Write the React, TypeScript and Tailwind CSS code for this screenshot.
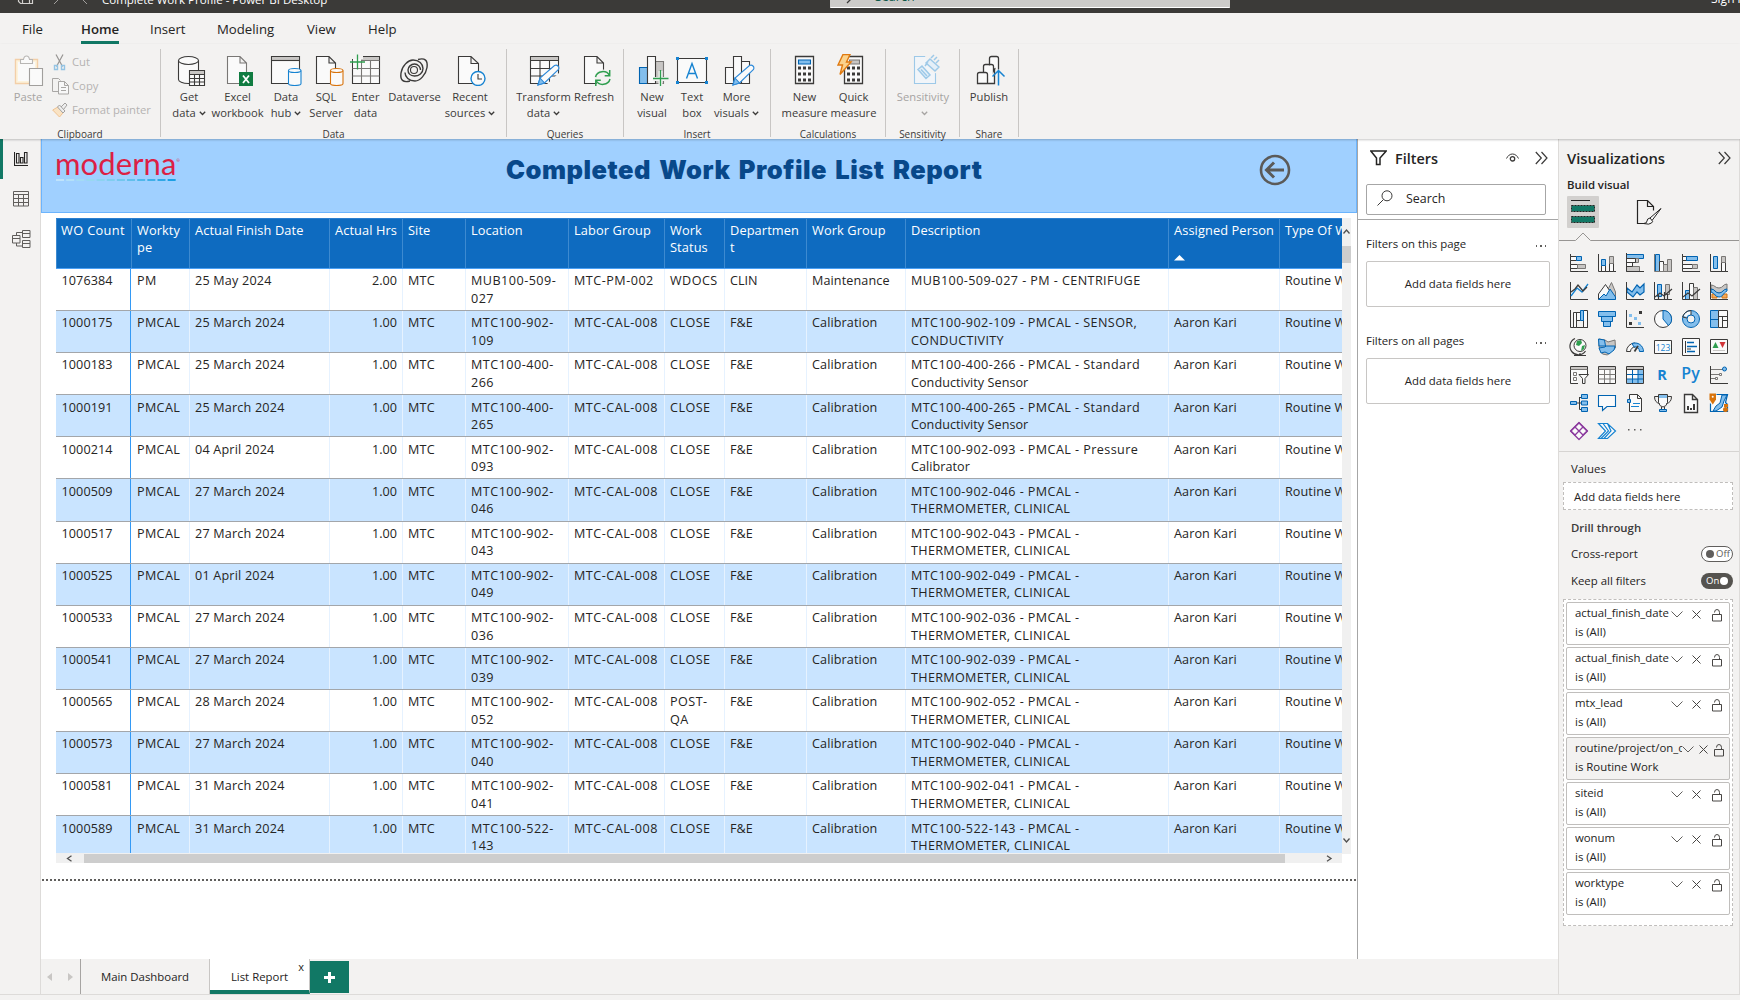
import React from "react";

type P = { children?: React.ReactNode };

const K = "#3b3a39";
const B = "#0063b1";
const L = "#83beec";
const G = "#797775";
const S = "#c8c6c4";
const W = "#fafafa";

/* ---------- ribbon ---------- */

function RI({ children, w = 32 }: P & { w?: number }) {
  return (
    <svg width={w} height="32" viewBox={`0 0 ${w} 32`} fill="none" strokeWidth="1.1" className="block shrink-0">
      {children}
    </svg>
  );
}

const Doc = ({ c = K }: { c?: string }) => (
  <path d="M5.500 2.500H18l6.500 6.500v20.500H5.500zM18 2.500v6.500h6.500" fill={W} stroke={c} />
);

const Pencil = () => (
  <g>
    <path d="M10 31l2-7L26.500 11.500q2-1 3.500.5t.5 3.500L16.500 29z" fill={W} stroke="#2b88d8" />
    <path d="M10 31l2-7 4.500 5z" fill={L} stroke="#2b88d8" />
  </g>
);

const icons: Record<string, React.ReactNode> = {
  paste: (
    <RI>
      <path d="M3.500 5.500h22v24h-22z" stroke="#f3cfa8" strokeWidth="1.400" fill="#fdf3dc" />
      <path d="M6 8h17v19H6z" fill={W} />
      <path d="M8.500 9.500v-4h3q.5-3.500 3-3.500t3 3.500h3v4z" fill={W} stroke="#b8b6b4" />
      <path d="M17.500 14.500h13v17h-13z" fill={W} stroke="#a19f9d" />
    </RI>
  ),
  getdata: (
    <RI>
      <path d="M3.500 6.500v19c0 2 4 4 10 4s10-2 10-4v-19" fill={W} stroke={K} />
      <ellipse cx="13.500" cy="6.500" rx="10" ry="4" fill={W} stroke={K} />
      <path d="M14.500 16.500h15v15h-15z" fill={W} stroke={K} />
      <path d="M15 17h14v3H15z" fill={S} />
      <path d="M14.500 20.500h15M14.500 24.500h15M14.500 28h15M19.500 20v12M24.500 20v12" stroke={K} />
    </RI>
  ),
  excel: (
    <RI>
      <Doc c={G} />
      <path d="M17 18h14v14H17z" fill="#107c41" />
      <path d="M21 21.500l6 7.500M27 21.500L21 29" stroke="#fff" strokeWidth="1.800" />
    </RI>
  ),
  datahub: (
    <RI>
      <path d="M1.500 2.500h28v27h-28z" fill={W} stroke={K} />
      <path d="M2 3h27v3.500H2z" fill={S} />
      <path d="M1.500 6.500h28" stroke={K} />
      <path d="M18.500 16.500v13c0 1.200 2.500 2 6.200 2s6.300-.8 6.300-2v-13" fill={W} stroke="#1683d1" />
      <ellipse cx="24.700" cy="16.500" rx="6.200" ry="2" fill={W} stroke="#1683d1" />
    </RI>
  ),
  sql: (
    <RI>
      <path d="M4.500 2.500H17l6.500 6.500v20.500h-19zM17 2.500v6.500h6.500" fill={W} stroke={K} />
      <path d="M18.500 16.500v13c0 1.200 2.500 2 6.200 2s6.300-.8 6.300-2v-13" fill={W} stroke="#d8730c" />
      <ellipse cx="24.700" cy="16.500" rx="6.200" ry="2" fill={W} stroke="#d8730c" />
    </RI>
  ),
  enter: (
    <RI>
      <path d="M3.500 2.500h27v27h-27z" fill={W} stroke={K} />
      <path d="M4 3h26v3.500H4z" fill={S} />
      <path d="M3.500 6.500h27M3.500 14.500h27M3.500 22h27M12.500 7v22M21.500 7v22" stroke={G} />
      <path d="M0 0h14v5H3v10H0z" fill="#f3f2f1" />
      <path d="M4 5h8v9H4z" fill={W} />
      <path d="M8.500.5v15M1 8h15" stroke="#2f9e4f" strokeWidth="1.300" />
    </RI>
  ),
  dataverse: (
    <RI>
      <path
        d="M12 27c-7 2-10-1-9-8S10 6 15 6c6 0 10 4 10 8.500S21 22 16.500 22 10 19 10 16s3-6 6.500-6 6 3 6 6M20 5.500c7-2 10 1 9 8S22 27 17 27c-6 0-10-4-10-8.500"
        stroke={K}
        strokeWidth="1.400"
      />
      <circle cx="16" cy="16" r="3.500" stroke={K} />
    </RI>
  ),
  recent: (
    <RI>
      <path d="M4.500 2.500H17l7.500 7v20h-20zM17 2.500v7h7.500" fill={W} stroke={K} />
      <circle cx="24" cy="24.500" r="7" fill={W} stroke="#1683d1" strokeWidth="1.400" />
      <path d="M24 20v5h4" stroke={K} />
    </RI>
  ),
  transform: (
    <RI>
      <path d="M2.500 2.500h28v27h-28z" fill={W} stroke={K} />
      <path d="M3 3h27v3.500H3z" fill={S} />
      <path d="M2.500 6.500h28M2.500 14.500h28M2.500 22h28M12 7v22M21.500 7v22" stroke={K} />
      <path d="M18 31l15-14v16z" fill="#f3f2f1" />
      <Pencil />
    </RI>
  ),
  refresh: (
    <RI>
      <Doc />
      <circle cx="24" cy="24" r="8.500" fill="#f3f2f1" />
      <path d="M16.500 23a7.500 7 0 0 1 14-1.500M31 25a7.500 7 0 0 1-14 1.500M30.700 16v5.700h-5M16.800 32v-5.700h5" stroke="#2f9e4f" strokeWidth="1.500" />
    </RI>
  ),
  newvisual: (
    <RI>
      <path d="M2.500 13.500h8v16h-8z" fill={L} stroke={B} />
      <path d="M18.500 7.500h8v22h-8z" fill={S} stroke={G} />
      <path d="M10.500 2.500h8v27h-8z" fill={W} stroke={K} />
      <path d="M23.500 17v15M16 25h15" stroke="#f3f2f1" strokeWidth="4" />
      <path d="M23.500 16v16M16 24.500h15.500" stroke="#2f9e4f" strokeWidth="1.300" />
    </RI>
  ),
  textbox: (
    <RI>
      <path d="M1.500 4.500h29v24h-29z" fill={W} stroke={K} />
      <path d="M10.500 24.500L16 9.500l5.500 15M12.500 19.500h7" stroke="#1683d1" strokeWidth="1.400" />
      <path d="M0 3h3v3H0zM29 3h3v3h-3zM0 27h3v3H0zM29 27h3v3h-3z" fill="#1683d1" />
    </RI>
  ),
  more: (
    <RI>
      <path d="M2.500 13.500h8v16h-8zM18.500 7.500h8v22h-8zM10.500 2.500h8v27h-8z" fill={W} stroke={K} />
      <Pencil />
    </RI>
  ),
  calc: (
    <RI>
      <path d="M7.500 2.500h18v27h-18z" fill={W} stroke={K} strokeWidth="1.300" />
      <path d="M10.500 6h12v4h-12z" fill={L} stroke={B} />
      <path d="M11.500 12.500v16M16.500 12.500v16M21.500 12.500v16" stroke={K} strokeWidth="3" strokeDasharray="3 3" />
    </RI>
  ),
  quick: (
    <RI>
      <path d="M7.500 2.500h18v27h-18z" fill={W} stroke={K} strokeWidth="1.300" />
      <path d="M12.500 6h10v4h-10z" fill={S} stroke={G} />
      <path d="M11.500 12.500v16M16.500 12.500v16M21.500 12.500v16" stroke={K} strokeWidth="3" strokeDasharray="3 3" />
      <path d="M6 .5h7L9.500 8h4.500L3 20.500 5.500 11H1z" fill="#fbd38d" stroke="#e07a10" strokeWidth="1.400" />
    </RI>
  ),
  sens: (
    <RI>
      <path d="M6.500 2.500h21v27h-21z" fill="#f1f5f9" stroke="#9dc9e8" />
      <path d="M17 2l14-2v20l-8-2z" fill="#f3f2f1" />
      <path d="M10 15.500l4-3.500 8 9-4 3.500zM13 15.500l6 6.500M18 9l4-4 9 8-4 4zM23 4l3-3M26 6l3-3M28 9l3-3M17 12l3-4" fill="#e4eff8" stroke="#9dc9e8" strokeWidth="1.500" />
    </RI>
  ),
  publish: (
    <RI>
      <path d="M14.500 11.500v-7q0-2 2-2h5q2 0 2 2v11M8.500 19.500v-7q0-2 2-2h6q2 0 2 2v17" fill={W} stroke={K} strokeWidth="1.300" />
      <path d="M2.500 29.500V20.500q0-2 2-2h6q2 0 2 2v9zM12.500 29.500h7v-14q0-1 1-1" fill={W} stroke={K} strokeWidth="1.300" />
      <path d="M23.500 31.500V17M17.500 22.500l6-6 6 6" stroke="#1683d1" strokeWidth="1.500" />
    </RI>
  ),
};

function Chev({ c = "#3b3a39" }: { c?: string }) {
  return (
    <svg width="7" height="5" viewBox="0 0 7 5" fill="none" className="mt-px ml-[3px] inline-block">
      <path d="M.8.8l2.700 2.700L6.200.8" stroke={c} strokeWidth="1.300" />
    </svg>
  );
}

function Btn({ icon, a, b, chev, w, dim, shift }: { icon: string; a: string; b?: string; chev?: boolean; w: string; dim?: boolean; shift?: string }) {
  return (
    <div className={`flex shrink-0 flex-col items-center whitespace-nowrap text-[11.2px] leading-4 ${w} ${dim ? "text-[#a6a4a2]" : "text-[#3b3a39]"}`}>
      <div className={shift ?? ""}>{icons[icon]}</div>
      <div className="mt-[3px]">{a}</div>
      <div className="flex h-4 items-center">
        {b}
        {chev && <Chev c={dim ? "#a6a4a2" : "#3b3a39"} />}
      </div>
    </div>
  );
}

function Group({ label, w, pl, children }: P & { label: string; w: string; pl?: string }) {
  return (
    <div className={`flex h-[88px] shrink-0 flex-col border-r border-[#c8c6c4] ${w}`}>
      <div className={`flex h-[79px] shrink-0 pt-[5px] ${pl ?? ""}`}>{children}</div>
      <div className="text-center text-[10px] leading-[12px] text-[#3b3a39]">{label}</div>
    </div>
  );
}

function Ribbon() {
  return (
    <div className="relative z-10 flex h-[95px] shrink-0 pt-[5px] shadow-[0_1px_2px_rgba(0,0,0,0.22)]">
      <Group label="Clipboard" w="w-[161px]" pl="pl-[14px]">
        <Btn icon="paste" a="Paste" w="w-[28px]" dim />
        <div className="-mt-1 ml-[10px] flex flex-col text-[11.300px] text-[#b5b3b1]">
          <div className="flex h-6 items-center gap-[5px]">
            <svg width="15" height="17" viewBox="0 0 15 17" fill="none">
              <path d="M4 .5l6.500 12M11 .5L4.500 12.500" stroke="#979593" strokeWidth="1.200" />
              <path d="M2.500 11.500h3v4h-3zM9.500 11.500h3v4h-3z" stroke="#94c4e4" strokeWidth="1.400" />
            </svg>
            Cut
          </div>
          <div className="flex h-6 items-center gap-[3px]">
            <svg width="17" height="17" viewBox="0 0 17 17" fill="none" stroke="#a9a7a5">
              <path d="M6.500 13.500h-6V.5h6l2 2" />
              <path d="M6.500 3.500h6l4 4v8.500h-10zM12.500 3.500v4h4M9 9.500h5M9 12.500h5" fill="#f8f8f8" />
            </svg>
            Copy
          </div>
          <div className="flex h-6 items-center gap-1 whitespace-nowrap">
            <svg width="16" height="16" viewBox="0 0 16 16" fill="none">
              <path d="M.7 8l6-3.500 5 5.500-4.200 5z" fill="#f9e3c4" stroke="#efc291" />
              <path d="M5.500 5l2-2 5.500 6-2 2zM9 5l4-4 2 2-3.500 4.500" fill="#eee" stroke="#a3a19f" />
            </svg>
            Format painter
          </div>
        </div>
      </Group>
      <Group label="Data" w="w-[346px]" pl="pl-[5px]">
        <Btn icon="getdata" a="Get" b="data" chev w="w-[46px]" shift="pl-[4px]" />
        <Btn icon="excel" a="Excel" b="workbook" w="w-[51px]" />
        <Btn icon="datahub" a="Data" b="hub" chev w="w-[46px]" />
        <Btn icon="sql" a="SQL" b="Server" w="w-[34px]" shift="pl-[3px]" />
        <Btn icon="enter" a="Enter" b="data" w="w-[45px]" shift="pr-[2px]" />
        <Btn icon="dataverse" a="Dataverse" w="w-[53px]" shift="pr-[2px]" />
        <Btn icon="recent" a="Recent" b="sources" chev w="w-[58px]" />
      </Group>
      <Group label="Queries" w="w-[117px]" pl="pl-[9px]">
        <Btn icon="transform" a="Transform" b="data" chev w="w-[55px]" />
        <Btn icon="refresh" a="Refresh" w="w-[46px]" shift="pl-[2px]" />
      </Group>
      <Group label="Insert" w="w-[147px]" pl="pl-[7px]">
        <Btn icon="newvisual" a="New" b="visual" w="w-[42px]" shift="pl-[2px]" />
        <Btn icon="textbox" a="Text" b="box" w="w-[38px]" />
        <Btn icon="more" a="More" b="visuals" chev w="w-[51px]" shift="pl-[4px]" />
      </Group>
      <Group label="Calculations" w="w-[115px]" pl="pl-[9px]">
        <Btn icon="calc" a="New" b="measure" w="w-[49px]" shift="pr-[1px]" />
        <Btn icon="quick" a="Quick" b="measure" w="w-[49px]" shift="pr-[2px]" />
      </Group>
      <Group label="Sensitivity" w="w-[74px]" pl="pl-[9px]">
        <Btn icon="sens" a="Sensitivity" chev w="w-[56px]" dim shift="pl-[1px]" />
      </Group>
      <Group label="Share" w="w-[59px]" pl="pl-[6px]">
        <Btn icon="publish" a="Publish" w="w-[46px]" shift="pl-[4px]" />
      </Group>
    </div>
  );
}

/* ---------- table ---------- */

const cols = "grid grid-cols-[76px_58px_140px_73px_63px_103px_96px_60px_82px_99px_263px_111px_120px]";

const heads = ["WO Count", "Workty\npe", "Actual Finish Date", "Actual Hrs", "Site", "Location", "Labor Group", "Work\nStatus", "Departmen\nt", "Work Group", "Description", "Assigned Person", "Type Of Work"];

const T = "THERMOMETER, CLINICAL";
const raw: [string, string, string, string, string][] = [
  ["1000175", "25 March 2024", "MTC100-902-109", "SENSOR,\nCONDUCTIVITY", "CLOSE"],
  ["1000183", "25 March 2024", "MTC100-400-266", "Standard\nConductivity Sensor", "CLOSE"],
  ["1000191", "25 March 2024", "MTC100-400-265", "Standard\nConductivity Sensor", "CLOSE"],
  ["1000214", "04 April 2024", "MTC100-902-093", "Pressure\nCalibrator", "CLOSE"],
  ["1000509", "27 March 2024", "MTC100-902-046", "\n" + T, "CLOSE"],
  ["1000517", "27 March 2024", "MTC100-902-043", "\n" + T, "CLOSE"],
  ["1000525", "01 April 2024", "MTC100-902-049", "\n" + T, "CLOSE"],
  ["1000533", "27 March 2024", "MTC100-902-036", "\n" + T, "CLOSE"],
  ["1000541", "27 March 2024", "MTC100-902-039", "\n" + T, "CLOSE"],
  ["1000565", "28 March 2024", "MTC100-902-052", "\n" + T, "POST-\nQA"],
  ["1000573", "27 March 2024", "MTC100-902-040", "\n" + T, "CLOSE"],
  ["1000581", "31 March 2024", "MTC100-902-041", "\n" + T, "CLOSE"],
  ["1000589", "31 March 2024", "MTC100-522-143", "\n" + T, "CLOSE"],
];

const splitLoc = (l: string) => l.slice(0, 11) + "\n" + l.slice(11);

const rows: string[][] = [
  ["1076384", "PM", "25 May 2024", "2.00", "MTC", splitLoc("MUB100-509-027"), "MTC-PM-002", "WDOCS", "CLIN", "Maintenance", "MUB100-509-027 - PM - CENTRIFUGE", "", "Routine Work"],
  ...raw.map(([id, d, loc, desc, st]) => [id, "PMCAL", d, "1.00", "MTC", splitLoc(loc), "MTC-CAL-008", st, "F&E", "Calibration", `${loc} - PMCAL - ${desc}`, "Aaron Kari", "Routine Work"]),
];

const tracks = [
  "tracking-[0.1px]",
  "tracking-[0.35px]",
  "tracking-[0.2px]",
  "",
  "tracking-[0.2px]",
  "tracking-[0.48px]",
  "tracking-[0.5px]",
  "tracking-[0.45px]",
  "",
  "tracking-[0.12px]",
  "tracking-[0.42px]",
  "tracking-[0.1px]",
  "tracking-[0.1px]",
];

function Desc({ text }: { text: string }) {
  const [first, second] = text.split("\n");
  return (
    <>
      <div>{first}</div>
      {second && <div className={second === second.toUpperCase() ? "tracking-[0.33px]" : "tracking-[0.05px]"}>{second}</div>}
    </>
  );
}

function DataTable() {
  return (
    <div className="ml-[15px] w-[1295px]">
      <div className="flex h-[636px]">
        <div className="h-[635px] w-[1286px] overflow-hidden text-[12.6px] leading-[17.5px]">
          <div className={`h-[51px] border-t border-b border-t-[#2b7fd0] border-b-[#4aa0f5] bg-[#0e6bc0] text-[12.800px] text-white ${cols}`}>
            {heads.map((h, i) => (
              <div key={h} className={`whitespace-pre border-r border-[#3d8ad0] pt-[3px] leading-[17px] ${i === 0 ? "border-l pl-[4px] tracking-[0.35px]" : "pl-[5px] tracking-[0.1px]"}`}>
                {h}
                {h === "Assigned Person" && (
                  <svg width="11" height="6" viewBox="0 0 11 6" className="mt-[16px] block">
                    <path d="M0 5.500L5.500 0 11 5.500z" fill="#fff" />
                  </svg>
                )}
              </div>
            ))}
          </div>
          {rows.map((r, i) => (
            <div key={r[0]} className={`h-[42.100px] border-b border-[#a3a6aa] text-[#252423] ${cols} ${i % 2 ? "bg-[#c9e4ff]" : "bg-white"}`}>
              {r.map((c, j) => (
                <div
                  key={j}
                  className={`whitespace-pre pt-[3.300px] ${tracks[j]} ${j === 0 ? "mr-px border-r border-[#3399f5] pl-[5.500px]" : "border-r border-[#e6f2ff] pl-[5px]"} ${j === 3 ? "pr-[5px] text-right" : ""}`}
                >
                  {j === 10 ? <Desc text={c} /> : c}
                </div>
              ))}
            </div>
          ))}
        </div>
        <div className="flex w-[9px] flex-col items-center bg-[#f0f0f0] pt-[11px]">
          <svg width="7" height="5" viewBox="0 0 7 5" fill="none">
            <path d="M.5 4.500l3-3.500 3 3.500" stroke="#505050" strokeWidth="1.300" />
          </svg>
          <div className="mt-3 h-[17px] w-full bg-[#cdcdcd]" />
          <div className="grow" />
          <svg width="7" height="5" viewBox="0 0 7 5" fill="none" className="mb-[11px]">
            <path d="M.5.5l3 3.500 3-3.500" stroke="#505050" strokeWidth="1.300" />
          </svg>
        </div>
      </div>
      <div className="-mt-px flex h-[10px] w-[1286px] items-center bg-[#f0f0f0]">
        <svg width="28" height="7" viewBox="0 0 28 7" fill="none">
          <path d="M15.500.8l-4 2.700 4 2.700" stroke="#505050" strokeWidth="1.300" />
        </svg>
        <div className="h-[9px] w-[1201px] bg-[#cdcdcd]" />
        <svg width="57" height="7" viewBox="0 0 57 7" fill="none">
          <path d="M42 .8l4 2.700-4 2.700" stroke="#505050" strokeWidth="1.300" />
        </svg>
      </div>
    </div>
  );
}

/* ---------- visual gallery icons ---------- */

const axis = <path d="M.5 0v17.500H18" stroke={K} />;

const viz: React.ReactNode[] = [
  <>{axis}<path d="M.5 2.500h6v4h-6zM.5 10.500h7v4h-7z" fill={W} stroke={K} /><path d="M6.500 2.500h5v4h-5z" fill={L} stroke={B} /><path d="M7.500 10.500h8v4h-8z" fill={S} stroke={G} /></>,
  <>{axis}<path d="M3.500 11.500h4v6h-4zM11.500 8.500h4v9h-4z" fill={W} stroke={K} /><path d="M3.500 5.500h4v6h-4z" fill={L} stroke={B} /><path d="M11.500 2.500h4v7h-4z" fill={S} stroke={G} /></>,
  <><path d="M.5.500h17v4H.5z" fill={L} stroke={B} /><path d="M.5 4.500h12v4H.5zM.5 12.500h13v5H.5z" fill={S} stroke={G} /><path d="M.5 4.500h9v4h-9zM.5 8.500h6v4h-6z" fill={W} stroke={K} /><path d="M.5-1v18.500H18" stroke={K} /></>,
  <><path d="M1.500.5h4v17h-4z" fill={L} stroke={B} /><path d="M5.500 7.500h4v10h-4z" fill={W} stroke={K} /><path d="M9.500 10.500h4v7h-4zM13.500 5.500h4v12h-4z" fill={S} stroke={G} /><path d="M.5 0v17.500H18" stroke={G} /></>,
  <>{axis}<path d="M.5 2.500h5v4h-5zM.5 10.500h10v4h-10z" fill={W} stroke={K} /><path d="M4.500 2.500h11v4h-11z" fill={L} stroke={B} /><path d="M10.500 10.500h5v4h-5z" fill={S} stroke={G} /></>,
  <>{axis}<path d="M11.500 8.500h4v9h-4z" fill={W} stroke={K} /><path d="M3.500 2.500h4v12h-4z" fill={L} stroke={B} /><path d="M11.500 2.500h4v6h-4z" fill={S} stroke={G} /></>,
  <>{axis}<path d="M1 14l6-8 5 4 6-8" stroke="#1683d1" strokeWidth="1.300" /><path d="M1 10l4-3 3-4 5 6 4-4" stroke={K} strokeWidth="1.300" /></>,
  <><path d="M7 13L13.500.5 17.500 10v7h-8z" fill={S} stroke={G} /><path d="M.5 12l7-9.500 6 9-6 5.500h-7z" fill={W} stroke={K} /><path d="M.5 17.500L6 12l2 2 4-7 5.500 8v2.500z" fill={L} stroke={B} /></>,
  <><path d="M1 6l5 4 5-7 3 3 4-4v8l-4 3-3-3-4 5-6-5z" fill={L} stroke={B} strokeWidth="1.200" />{axis}</>,
  <>{axis}<path d="M3.500 2.500h4v12h-4z" fill={L} stroke={B} /><path d="M11.500 2.500h4v10h-4z" fill={S} stroke={G} /><path d="M4.500 12v5M10.500 10v7M13.500 12v5M1 15l5-4 4 3 8-7" stroke={K} strokeWidth="1.200" /></>,
  <><path d="M3.500 8.500h4v9h-4z" fill={L} stroke={B} /><path d="M7.500 1.500h4v16h-4z" fill={W} stroke={K} /><path d="M11.500 5.500h4v12h-4z" fill={S} stroke={G} />{axis}<path d="M1 15l5-4 4 3 8-7" stroke={K} strokeWidth="1.200" /></>,
  <><path d="M2 12h5v4H2zM12 12h5v4h-5zM7 9h5v3H7z" fill="#f0a95c" stroke="#d8730c" /><path d="M1 3c4 0 4 3 8 3s4-4 8-4v5c-4 0-4 4-8 4s-4-4-8-4z" fill={S} stroke={G} /><path d="M1 7c4 0 4 4 8 4s4-4 8-4v2c-4 2-4 6-8 6s-4-4-8-5z" fill={L} stroke={B} />{axis}</>,
  <>{axis}<path d="M3.500 2.500h3v15h-3zM6.500 2.500h4v8h-4zM13.500.5h4v17h-4z" fill={W} stroke={K} /><path d="M10.500.5h3v10h-3z" fill={L} stroke={B} /></>,
  <path d="M.5 1.500h17v5H.5zM3.500 6.500h11v5h-11zM5.500 11.500h7v5h-7z" fill={L} stroke={B} />,
  <>{axis}<path d="M3 4h3v3H3zM8 7h3v3H8zM12 12h3v3h-3z" fill={L} /><path d="M13 1h3v3h-3zM3 12h3v3H3z" fill={K} /></>,
  <><circle cx="9" cy="9" r="8.500" fill={W} stroke={K} /><path d="M9 .5V9l5.500 6.500A8.500 8.500 0 0 0 9 .5z" fill={L} stroke={B} /></>,
  <><circle cx="9" cy="9" r="6.300" stroke={L} strokeWidth="4" /><path d="M2.500 6A6.500 6.500 0 0 1 9 2.500" stroke={W} strokeWidth="4" /><circle cx="9" cy="9" r="8.500" stroke={B} /><circle cx="9" cy="9" r="4" stroke={B} /><path d="M.7 7A8.500 8.500 0 0 1 9 .5V5M.7 7l4.300 1" stroke={K} /></>,
  <><path d="M.5.500h8v17h-8z" fill={L} stroke={B} /><path d="M.5 9.500h8" stroke={B} /><path d="M8.500.500h9v17h-9zM8.500 6.500h9M12.500 6.500v11M12.500 10.500h5" fill={W} stroke={K} /></>,
  <><circle cx="10" cy="7.500" r="6" fill={W} stroke={K} /><path d="M7 3l4-1 1 3-3 3-3-1zM12 8l3-1-1 4-3 2z" fill="#2f9e4f" /><path d="M5 .5A8.500 8.500 0 1 0 15.500 13M10 15v2.500M4 17.500h12" stroke={K} strokeWidth="1.200" /></>,
  <><path d="M1 1l6 1 3 2 7-2 .5 8-4 3-4 4-5-1L1 9z" fill={S} stroke={G} /><path d="M.5 1l6 1 1 6H1zM8 8h9l-1 4-5 4-4-2-4 1-2-5 6-1z" fill={L} stroke={B} /></>,
  <><path d="M.5 13.500A8.500 8.500 0 0 1 9 5v4a4.500 4.500 0 0 0-4.500 4.500z" fill={W} stroke={K} /><path d="M6 5.500a8.500 8.500 0 0 1 11.500 8h-4A4.500 4.500 0 0 0 8 9z" fill={L} stroke={B} /><path d="M8.500 13.500L12 8" stroke={K} strokeWidth="1.800" /></>,
  <><path d="M.5 2.500h17v13H.5z" fill={W} stroke={K} /><text x="9" y="12.500" fontSize="8.500" textAnchor="middle" fill="#1683d1" fontFamily="Open Sans">123</text></>,
  <><path d="M.5.500h17v17H.5z" fill={W} stroke={K} /><path d="M3.500 3v12M5 11h4" stroke={K} /><path d="M5 8.500h10M5 4.500h7M5 13.500h8" stroke={B} strokeWidth="1.500" /></>,
  <><path d="M.5 1.500h17v14H.5z" fill={W} stroke={K} /><path d="M2.500 10L5.500 4l3 6z" fill="#2f9e4f" /><path d="M9.500 4h6l-3 6z" fill="#d13438" /><path d="M3 12.500h12" stroke={S} /></>,
  <><path d="M.5.500h17v17H.5z" fill={W} stroke={K} /><path d="M1 1h16v2.500H1z" fill={S} /><path d="M.5 3.500h17M3.500 6.500h3v3h-3zM3.500 11.500h3v3h-3z" stroke={G} /><path d="M8 8h11v11H8z" fill="#f3f2f1" /><path d="M9 8.500h9.500l-3.500 4v5h-2.500v-5z" fill={W} stroke={K} /></>,
  <><path d="M.5.500h17v17H.5z" fill={W} stroke={K} /><path d="M1 1h16v2.500H1z" fill={S} /><path d="M.5 3.500h17M.5 8.500h17M.5 13h17M6.500 4v13M12 4v13" stroke={G} /></>,
  <><path d="M12 4h5v13H1v-4h11z" fill={L} /><path d="M1 4h11v9H1z" fill={W} /><path d="M1 1h16v2.500H1z" fill={S} /><path d="M.5 8.500h17M.5 13h17M6.500 4v13M12 4v13" stroke={B} /><path d="M.5.500h17v17H.5zM.5 3.500h17" stroke={K} /></>,
  <text x="8" y="14" fontSize="14.500" fontWeight="700" textAnchor="middle" fill="#1683d1" fontFamily="Open Sans">R</text>,
  <text x="8.500" y="13" fontSize="16" fontWeight="600" textAnchor="middle" fill="#1683d1" fontFamily="Open Sans">Py</text>,
  <>{axis}<path d="M1 3.500h12M1 8.500h8M1 12.500h4" stroke={G} /><circle cx="14.500" cy="3" r="2" fill={L} stroke={B} /><path d="M9.500 7.500h2v2h-2zM5.500 11.500h2v2h-2z" fill={W} stroke={G} /></>,
  <><path d="M7 9h5M9.500 3v12.500M9.500 3.500H12M9.500 15.500H12" stroke={K} /><path d="M.5 7.500h6v3h-6zM11.500.5h6v4h-6zM11.500 7h6v4h-6zM11.500 13.500h6v4h-6z" fill={L} stroke={B} /></>,
  <path d="M.5 1.500h17v11H9l-4.500 4v-4h-4z" fill={W} stroke={B} strokeWidth="1.100" />,
  <><path d="M3.500.5h8l4 4v13h-12zM11.500.5v4h4" fill={W} stroke={K} /><path d="M7 9.500h7M5 12.500h8" stroke="#1683d1" /><path d="M1.500 5.500h3v3h-3z" fill={L} stroke={B} /></>,
  <><path d="M4.500.5h9v8q-1 4-4.500 4.500Q5.500 12.500 4.500 8.500z" fill={W} stroke={K} /><path d="M4.500 2.500h-4q0 6 5 7M13.500 2.500h4q0 6-5 7M7.500 13v2.500M10.500 13v2.500" stroke={K} /><path d="M5 1h8v3H5z" fill={L} /><path d="M5.500 15.500h7v2h-7z" fill={L} stroke={B} /></>,
  <><path d="M2.500.5h8l5 5v13h-13zM10.500.5v5h5" fill={W} stroke={K} strokeWidth="1.400" /><path d="M5 12h2v4H5zM8 14h2v2H8zM11 10h2v6h-2z" fill={K} /></>,
  <><path d="M6.500.5h11l-2 8 2 2v7H.5v-8" fill={W} stroke={B} strokeWidth="1.200" /><path d="M12 1h5l-3 6-2 6-6 4H3l3-5 4-3z" fill={L} stroke={B} /><path d="M-.5-.5h6.500v6l-3.200 5-3.300-5z" fill="#d8730c" /><circle cx="2.700" cy="2.700" r="1" fill={W} /><path d="M14 10h4v3h-4z" fill="#d8730c" /><circle cx="15.500" cy="15.500" r="2.500" fill="#d8730c" /></>,
  <g stroke="#8b3a9e" strokeWidth="1.300" fill={W}><path d="M9 .5L17.500 9 9 17.500.5 9z" strokeLinejoin="round" /><path d="M9 1l4 4-4 4-4-4zM5 5l4 4-4 4-4-4zM13 5l4 4-4 4-4-4z" /></g>,
  <path d="M.5 1.500h9l8 7.500-8 7.500h-9L7.500 9zM9.500 1.500L13 9 6 16.500M5 1.500L10.500 9 3 16.500" stroke="#1683d1" strokeWidth="1.200" fill={W} />,
  <path d="M2 7h1.500v1.500H2zM8 7h1.500v1.500H8zM14 7h1.500v1.500H14z" fill="#605e5c" />,
];

const Dbl = () => (
  <svg width="13" height="14" viewBox="0 0 13 14" fill="none" stroke="#3b3a39" strokeWidth="1.200">
    <path d="M.8 1l5.500 6-5.500 6M6.500 1L12 7l-5.500 6" />
  </svg>
);

/* ---------- panes ---------- */

function FilterPane() {
  return (
    <div className="flex w-[201px] shrink-0 flex-col border-l border-[#a6a6a6] bg-white text-[11.400px] text-[#252423]">
      <div className="flex h-[45px] items-start pt-[9px] pl-[12px]">
        <svg width="17" height="16" viewBox="0 0 17 16" fill="none" className="mt-[2px]">
          <path d="M.8 1h15.400L10 8v6.500H6.500V8z" stroke="#252423" strokeWidth="1.500" />
        </svg>
        <span className="ml-2 w-[111px] pt-px text-[14.400px] leading-[19px] font-semibold">Filters</span>
        <svg width="13" height="9" viewBox="0 0 13 9" fill="none" stroke="#3b3a39" className="mt-[5px]">
          <path d="M.5 5.500C2 2.500 4 1 6.500 1s4.500 1.500 6 4.500" />
          <circle cx="6.500" cy="5.800" r="2.200" strokeWidth="1.300" />
        </svg>
        <span className="mt-[3px] ml-[16px]"><Dbl /></span>
      </div>
      <div className="ml-2 flex h-[31px] w-[180px] items-center rounded-[2px] border border-[#a6a6a6] pl-[10px]">
        <svg width="16" height="16" viewBox="0 0 16 16" fill="none" stroke="#3b3a39" className="-mt-1">
          <circle cx="10" cy="5.800" r="5" />
          <path d="M6.500 9.500L.5 15.500" />
        </svg>
        <span className="ml-[13px] text-[12.4px]">Search</span>
      </div>
      <div className="h-[5px] border-b border-[#a6a6a6]" />
      <FilterBlock title="Filters on this page" />
      <FilterBlock title="Filters on all pages" />
    </div>
  );
}

function FilterBlock({ title }: { title: string }) {
  return (
    <div className="mt-[14px] mb-[10px] pl-2">
      <div className="flex h-5 w-[180px] items-center justify-between">
        <span>{title}</span>
        <span className="flex gap-[3px] pt-1">
          <i className="h-[1.500px] w-[1.500px] bg-[#605e5c]" />
          <i className="h-[1.500px] w-[1.500px] bg-[#605e5c]" />
          <i className="h-[1.500px] w-[1.500px] bg-[#605e5c]" />
        </span>
      </div>
      <div className="mt-[7px] flex h-[46px] w-[184px] items-center justify-center rounded-[2px] border border-[#c8c6c4]">Add data fields here</div>
    </div>
  );
}

function Card({ name, val = "is (All)", on }: { name: string; val?: string; on?: boolean }) {
  return (
    <div className={`h-[43px] w-[164px] rounded-[2px] border border-[#c0bebc] pt-px pl-2 ${on ? "bg-[#f3f2f1]" : "bg-white"}`}>
      <div className="flex leading-[18px]">
        <span className={`overflow-hidden whitespace-nowrap ${on ? "w-[107px]" : "w-[96px] tracking-[-0.05px]"}`}>{name}</span>
        <svg width="12" height="7" viewBox="0 0 12 7" fill="none" stroke="#605e5c" className="mt-[7px] shrink-0">
          <path d="M.5.500L6 6 11.500.500" />
        </svg>
        <svg width="9" height="9" viewBox="0 0 9 9" fill="none" stroke="#484644" className={`mt-[6px] shrink-0 ${on ? "ml-[5px]" : "ml-[9px]"}`}>
          <path d="M.5.500l8 8M8.500.500l-8 8" />
        </svg>
        <svg width="10" height="13" viewBox="0 0 10 13" fill="none" stroke="#484644" className={`mt-[5px] shrink-0 ${on ? "ml-[6px]" : "ml-[11px]"}`}>
          <path d="M.5 5.500h9v6.500h-9zM2.500 3.500q0-3 2.500-3t2.500 3v2" />
        </svg>
      </div>
      <div className="leading-[19px]">{val}</div>
    </div>
  );
}

function VizPane() {
  return (
    <div className="flex w-[182px] shrink-0 flex-col border-x border-[#dddbd9] bg-[#f3f2f1] text-[11.400px] text-[#252423]">
      <div className="flex h-[37px] items-start justify-between pt-[9px] pr-2 pl-2">
        <span className="text-[14.800px] leading-[20px] font-semibold">Visualizations</span>
        <span className="mt-[3px]"><Dbl /></span>
      </div>
      <div className="h-5 pl-2 font-semibold leading-[17px] tracking-[-0.05px]">Build visual</div>
      <div className="flex h-8 pl-2">
        <div className="h-8 w-8 rounded-[1px] bg-[#d2d0ce]">
          <svg width="32" height="32" viewBox="0 0 32 32" fill="none">
            <path d="M4 4.500h19" stroke="#252423" />
            <path d="M4.500 9.500h23v6h-23zM4.500 20.500h23v6h-23z" fill="#117865" stroke="#252423" strokeDasharray="2 1" />
          </svg>
        </div>
        <svg width="26" height="26" viewBox="0 0 26 26" fill="none" stroke="#252423" className="mt-[3px] ml-[37px]">
          <path d="M9.500 24.500h-8V1.500h10l6 6v4M11.500 1.500v6h6" strokeWidth="1.200" />
          <path d="M25 9.500L14 19l2 2.500zM14 19q-3 .5-3 3t-3.500 2.500q6 1.500 8-.5t.5-2.500" fill={W} />
        </svg>
      </div>
      <svg width="180" height="14" viewBox="0 0 180 14" fill="none" className="mt-[4px] block">
        <path d="M0 8.500h16.500l7.500-7.500 7.500 7.500H180" stroke="#979593" />
      </svg>
      <div className="mt-[8px] grid grid-cols-[repeat(6,28px)] pl-[11px]">
        {viz.map((v, i) => (
          <div key={i} className="h-7">
            <svg width="18" height="18" viewBox="0 0 18 18" fill="none" className="block overflow-visible">
              {v}
            </svg>
          </div>
        ))}
      </div>
      <div className="mt-px border-t border-[#d6d4d2]" />
      <div className="mt-[7px] h-[23px] pl-[12px] leading-[19px]">Values</div>
      <div className="ml-1 h-[28px] w-[170px] border border-dashed border-[#c0bebc] bg-white pl-[10px] leading-[27px]">Add data fields here</div>
      <div className="mt-[8px] h-5 pl-[12px] font-semibold leading-[19px] text-[#3b3a39]">Drill through</div>
      <div className="mt-2 flex h-4 items-center justify-between pr-[6px] pl-[12px]">
        Cross-report
        <span className="flex h-4 w-8 items-center gap-[2px] rounded-full border border-[#605e5c] bg-white pl-1 text-[9.500px] text-[#605e5c]">
          <i className="h-2 w-2 rounded-full bg-[#605e5c]" />Off
        </span>
      </div>
      <div className="mt-[11px] flex h-4 items-center justify-between pr-[6px] pl-[12px]">
        Keep all filters
        <span className="flex h-4 w-8 items-center gap-[1px] rounded-full bg-[#55534f] pl-[5px] text-[9.500px] text-white">
          On<i className="h-2 w-2 rounded-full bg-white" />
        </span>
      </div>
      <div className="mt-[10px] ml-1 flex h-[327px] w-[170px] flex-col gap-[2px] border border-dashed border-[#c0bebc] bg-white pt-[2px] pl-[2px]">
        <Card name="actual_finish_date" />
        <Card name="actual_finish_date" />
        <Card name="mtx_lead" />
        <Card name="routine/project/on_demand" val="is Routine Work" on />
        <Card name="siteid" />
        <Card name="wonum" />
        <Card name="worktype" />
      </div>
    </div>
  );
}

function Rail() {
  return (
    <div className="flex w-[41px] shrink-0 flex-col border-r border-[#dddbd9]">
      <div className="flex h-10 items-center border-l-[3px] border-[#117865] pl-[11px]">
        <svg width="14" height="14" viewBox="0 0 14 14" fill="none" stroke="#252423" strokeWidth="1.100">
          <path d="M.5 0v13.500H14M2.500 1.500h2.500v9.500H2.500zM6.500 5.500H9V11H6.500zM10.500.5H13V11h-2.500z" />
        </svg>
      </div>
      <svg width="16" height="16" viewBox="0 0 16 16" fill="none" stroke="#605e5c" className="mt-3 ml-[13px]">
        <path d="M.5.500h15v14.500H.5zM.5 3.500h15M.5 7.500h15M.5 11.500h15M5.500 3.500v11.500M10.500 3.500v11.500" />
      </svg>
      <svg width="19" height="18" viewBox="0 0 19 18" fill="none" stroke="#605e5c" className="mt-[23px] ml-3">
        <path d="M.5 5.500h7.500v7.500H.5zM.5 8.500H8M10.500.5h7.500V7.500h-7.500zM10.500 3.500H18M10.500 10.500h7.500v7h-7.500zM10.500 13.500H18M4.500 5.500v-3h6M4.500 13v3h6" />
      </svg>
    </div>
  );
}

const dashes = ["#c0e3fb", "#b4e0f8", "#a4dbf4", "#98d8f0", "#8cd3ef", "#80ceee", "#72c7ed", "#62c0eb", "#50b8ea", "#40b0e8", "#30a8e6", "#1ba0e4"];

function ReportHeader() {
  return (
    <div className="flex h-[74px] border border-t-0 border-[#6cb4fd] bg-[#a0d0ff]">
      <div className="ml-[13px] flex w-[451px] flex-col pt-[13px]">
        <div className="flex h-[26px] items-center">
          <span className="-mt-[3px] font-['Lato'] text-[31px] leading-none tracking-[0.1px] text-[#dc1f45]">moderna</span>
          <span className="-mt-2 text-[4px] text-[#dc1f45]">®</span>
        </div>
        <svg width="122" height="2" viewBox="0 0 122 2" className="mt-[1px] ml-px">
          {dashes.map((c, i) => (
            <rect key={c} x={i * 10.15} width="8" height="2" fill={c} />
          ))}
        </svg>
      </div>
      <div className="w-[753px] pt-[15px] font-['Inter'] text-[25.500px] leading-8 font-black tracking-[0.500px] whitespace-nowrap text-[#08488a] [word-spacing:2.800px]">Completed Work Profile List Report</div>
      <svg width="32" height="32" viewBox="0 0 32 32" fill="none" stroke="#5b5a58" strokeWidth="2.600" className="mt-[15px]">
        <circle cx="16" cy="16" r="14" />
        <path d="M25 16H8M15 8.500L7.500 16l7.500 7.500" strokeWidth="3" />
      </svg>
    </div>
  );
}

export default function App() {
  return (
    <div className="flex h-[1000px] w-[1740px] flex-col overflow-hidden bg-[#f3f2f1] font-['Open_Sans','Noto_Sans',sans-serif] text-[#252423]">
      <div className="flex h-[13px] shrink-0 overflow-hidden bg-[#3b3a38] text-white">
        <svg width="102" height="13" viewBox="0 0 102 13" fill="none" className="shrink-0" stroke="#a19f9d">
          <path d="M18.500 0v1.500l2 2h12V0M22.500 3V-1h7v4" stroke="#d2d0ce" strokeWidth="1.200" />
          <path d="M54 4l5-5M87 4l-5-5" />
        </svg>
        <span className="-mt-[9px] w-[728px] shrink-0 text-[11.500px] leading-[18px] whitespace-nowrap">Complete Work Profile - Power BI Desktop</span>
        <div className="flex h-2 w-[400px] shrink-0 rounded-b-[1px] border-b border-white bg-[#cccbc9] text-[#0d5748]">
          <svg width="45" height="8" viewBox="0 0 45 8" fill="none">
            <path d="M17 3l5-5" stroke="#3b3a39" strokeWidth="1.300" />
          </svg>
          <span className="-mt-[12px] text-[12.500px] leading-[18px]">Search</span>
        </div>
        <span className="-mt-[10px] ml-[481px] shrink-0 text-[12px] leading-[18px] whitespace-nowrap">Sign in</span>
      </div>

      <div className="flex h-[31px] shrink-0 pl-[22px] text-[13.200px] leading-[32px]">
        <span className="w-[59px]">File</span>
        <span className="mr-[31px] w-[38px] border-b-[3px] border-[#117865] font-semibold">Home</span>
        <span className="w-[67px]">Insert</span>
        <span className="w-[90px]">Modeling</span>
        <span className="w-[61px]">View</span>
        <span>Help</span>
      </div>

      <Ribbon />

      <div className="flex h-[855px] shrink-0">
        <Rail />
        <div className="flex w-[1517px] shrink-0 flex-col">
          <div className="flex h-[820px]">
            <div className="flex w-[1316px] flex-col bg-white">
              <ReportHeader />
              <div className="h-[5px]" />
              <DataTable />
              <div className="mt-[16px] ml-px h-[2px] w-[1314px] bg-[repeating-linear-gradient(90deg,#605e5c_0_2px,transparent_2px_4px)]" />
            </div>
            <FilterPane />
          </div>
          <div className="flex h-[35px] text-[11.400px]">
            <div className="flex w-[40px] items-center justify-between border-r border-[#a6a4a2] pr-[7px] pl-[6px]">
              <i className="border-y-4 border-r-[5px] border-y-transparent border-r-[#c8c6c4]" />
              <i className="border-y-4 border-l-[5px] border-y-transparent border-l-[#c8c6c4]" />
            </div>
            <div className="flex w-[129px] items-center justify-center border-r border-[#c8c6c4]">Main Dashboard</div>
            <div className="relative flex w-[100px] items-center justify-center border-r border-b-4 border-[#c8c6c4] border-b-[#117865] bg-white pt-1">
              List Report
              <span className="absolute top-0 right-[5px] text-[11px] leading-4">x</span>
            </div>
            <div className="mt-[2px] flex h-8 w-[39px] items-center justify-center bg-[#117865]">
              <svg width="11" height="11" viewBox="0 0 11 11">
                <path d="M5.500 0v11M0 5.500h11" stroke="#fff" strokeWidth="3" />
              </svg>
            </div>
          </div>
        </div>
        <VizPane />
      </div>
      <div className="border-t border-[#dddbd9]" />
    </div>
  );
}
